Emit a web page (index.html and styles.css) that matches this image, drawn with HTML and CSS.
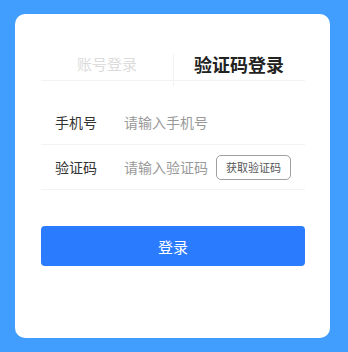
FILE: index.html
```html
<!DOCTYPE html>
<html lang="zh">
<head>
<meta charset="utf-8">
<link rel="stylesheet" href="styles.css">
</head>
<body>
<div class="card">
  <div class="tabs">
    <div class="tab">账号登录</div>
    <div class="tab active">验证码登录</div>
  </div>
  <div class="row">
    <span class="label">手机号</span>
    <input class="field" type="text" placeholder="请输入手机号">
  </div>
  <div class="row">
    <span class="label">验证码</span>
    <input class="field code" type="text" placeholder="请输入验证码">
    <button class="send" type="button">获取验证码</button>
  </div>
  <button class="submit" type="button">登录</button>
</div>
</body>
</html>
```
FILE: styles.css
```css
html, body {
  margin: 0;
  padding: 0;
}
body {
  background: #419eff;
  width: 348px;
  height: 352px;
  padding: 14px 18px 14px 15px;
  box-sizing: border-box;
  font-family: "Noto Sans CJK SC", "Noto Sans", sans-serif;
}
.card {
  background: #fff;
  border-radius: 10px;
  width: 315px;
  height: 324px;
  box-sizing: border-box;
  padding: 40px 25px 0 26px;
}
.tabs {
  display: flex;
  position: relative;
  border-bottom: 1px solid #f3f3f3;
  padding-bottom: 6px;
}
.tabs::after {
  content: "";
  position: absolute;
  left: 132px;
  top: 0;
  width: 1px;
  height: 32px;
  background: #f3f3f3;
}
.tab {
  flex: 1;
  text-align: center;
  line-height: 20px;
  height: 20px;
  font-size: 15px;
  color: #dcdcdc;
}
.tab.active {
  font-size: 18px;
  font-weight: bold;
  color: #222;
}
.row {
  display: flex;
  align-items: center;
  height: 44px;
  border-bottom: 1px solid #f3f3f3;
  padding-left: 14px;
}
.tabs + .row {
  margin-top: 19px;
}
.label {
  width: 69px;
  font-size: 14px;
  color: #333;
}
.field {
  flex: 1;
  min-width: 0;
  border: none;
  outline: none;
  padding: 0;
  font-size: 14px;
  font-family: inherit;
  color: #333;
  background: transparent;
}
.field::placeholder {
  color: #999;
}
.field.code {
  flex: 0 0 84px;
  width: 84px;
}
.send {
  margin-left: 8px;
  width: 75px;
  height: 25px;
  border: 1px solid #a0a0a0;
  border-radius: 5px;
  background: #fff;
  font-size: 11px;
  font-family: inherit;
  color: #555;
  padding: 0;
}
.submit {
  display: block;
  margin-top: 36px;
  width: 264px;
  height: 40px;
  border: none;
  border-radius: 4px;
  background: #2b7bff;
  color: #fff;
  font-size: 15px;
  font-family: inherit;
  padding: 0;
}
```
